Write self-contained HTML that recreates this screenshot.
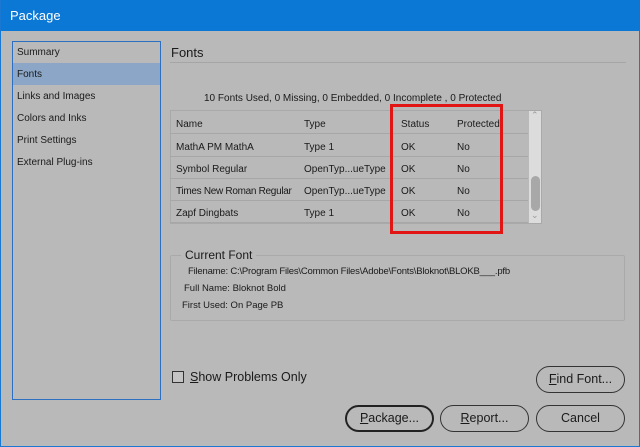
<!DOCTYPE html><html><head><style>
*{margin:0;padding:0;box-sizing:border-box}
body{width:640px;height:447px;background:#b9b9b9;font-family:"Liberation Sans",sans-serif;font-size:10px;color:#1a1a1a;position:relative;overflow:hidden;border:1px solid #1a78d2;border-top:none}
.a{position:absolute;white-space:nowrap}
.tb{left:0;top:0;width:640px;height:31px;background:#0c78d6;color:#fff;font-size:13px;padding:8px 9px}
.list{left:11px;top:41px;width:149px;height:359px;border:1px solid #2d6fc0}
.btn{position:absolute;height:27px;border:1px solid #333;border-radius:14px;text-align:center;line-height:25px;font-size:12.5px}
.row{position:absolute;left:169px;width:358px;height:22px;border-bottom:1px solid #a7a7a7}
</style></head><body>
<div class="a tb">Package</div>
<div class="a list"></div>
<div class="a" style="left:12px;top:63px;width:147px;height:22px;background:#8ba6c6"></div>
<div class="a" style="left:16px;top:47px">Summary</div>
<div class="a" style="left:16px;top:69px">Fonts</div>
<div class="a" style="left:16px;top:91px">Links and Images</div>
<div class="a" style="left:16px;top:113px">Colors and Inks</div>
<div class="a" style="left:16px;top:135px">Print Settings</div>
<div class="a" style="left:16px;top:157px">External Plug-ins</div>
<div class="a" style="left:170px;top:45px;font-size:13px">Fonts</div>
<div class="a" style="left:169px;top:62px;width:456px;height:1px;background:#a5a5a5"></div>
<div class="a" style="left:203px;top:93px">10 Fonts Used, 0 Missing, 0 Embedded, 0 Incomplete , 0 Protected</div>
<div class="a" style="left:169px;top:110px;width:372px;height:114px;border:1px solid #a9a9a9"></div>
<div class="row" style="top:112px"></div>
<div class="row" style="top:135px"></div>
<div class="row" style="top:157px"></div>
<div class="row" style="top:179px"></div>
<div class="row" style="top:201px"></div>
<div class="a" style="left:528px;top:111px;width:12px;height:112px;background:#dcdcdc"></div>
<div class="a" style="left:530px;top:176px;width:9px;height:35px;background:#a8a8a8;border-radius:5px"></div>
<div class="a" style="left:530px;top:110px;font-size:9px;color:#999">&#8963;</div>
<div class="a" style="left:530px;top:210px;font-size:9px;color:#999">&#8964;</div>
<div class="a" style="left:175px;top:119px">Name</div><div class="a" style="left:303px;top:119px">Type</div><div class="a" style="left:400px;top:119px">Status</div><div class="a" style="left:456px;top:119px">Protected</div>
<div class="a" style="left:175px;top:142px">MathA PM MathA</div><div class="a" style="left:303px;top:142px">Type 1</div><div class="a" style="left:400px;top:142px">OK</div><div class="a" style="left:456px;top:142px">No</div>
<div class="a" style="left:175px;top:164px">Symbol Regular</div><div class="a" style="left:303px;top:164px">OpenTyp...ueType</div><div class="a" style="left:400px;top:164px">OK</div><div class="a" style="left:456px;top:164px">No</div>
<div class="a" style="left:175px;top:186px;letter-spacing:-0.3px">Times New Roman Regular</div><div class="a" style="left:303px;top:186px">OpenTyp...ueType</div><div class="a" style="left:400px;top:186px">OK</div><div class="a" style="left:456px;top:186px">No</div>
<div class="a" style="left:175px;top:208px">Zapf Dingbats</div><div class="a" style="left:303px;top:208px">Type 1</div><div class="a" style="left:400px;top:208px">OK</div><div class="a" style="left:456px;top:208px">No</div>
<div class="a" style="left:389px;top:104px;width:113px;height:130px;border:3px solid #e21515"></div>
<div class="a" style="left:169px;top:255px;width:455px;height:66px;border:1px solid #a9a9a9;border-radius:2px"></div>
<div class="a" style="left:180px;top:248px;background:#b9b9b9;padding:0 4px;font-size:12px">Current Font</div>
<div class="a" style="left:187px;top:266px;font-size:9.5px;letter-spacing:-0.2px">Filename: C:\Program Files\Common Files\Adobe\Fonts\Bloknot\BLOKB___.pfb</div>
<div class="a" style="left:183px;top:283px;font-size:9.5px">Full Name: Bloknot Bold</div>
<div class="a" style="left:181px;top:300px;font-size:9.5px">First Used: On Page PB</div>
<div class="a" style="left:171px;top:371px;width:12px;height:12px;border:1px solid #333;background:#c4c4c4"></div>
<div class="a" style="left:189px;top:370px;font-size:12.5px"><u>S</u>how Problems Only</div>
<div class="btn" style="left:535px;top:366px;width:89px"><u>F</u>ind Font...</div>
<div class="btn" style="left:344px;top:405px;width:89px;border:2px solid #222;line-height:23px"><u>P</u>ackage...</div>
<div class="btn" style="left:439px;top:405px;width:89px"><u>R</u>eport...</div>
<div class="btn" style="left:535px;top:405px;width:89px">Cancel</div>
</body></html>
